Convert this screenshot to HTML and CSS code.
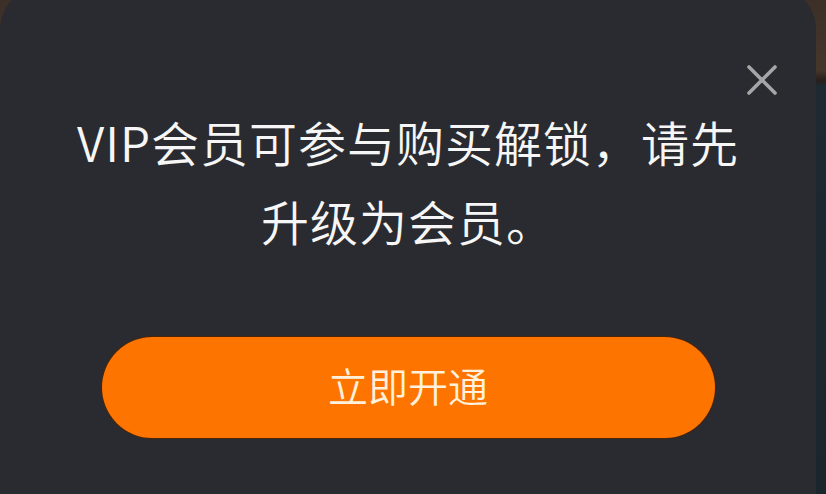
FILE: index.html
```html
<!DOCTYPE html>
<html lang="zh-CN">
<head>
<meta charset="utf-8">
<title>VIP</title>
<link rel="stylesheet" href="styles.css">
</head>
<body>
<div class="dialog">
  <button class="close" aria-label="关闭">
    <svg width="30" height="30" viewBox="0 0 30 30"><path d="M2 2 L28 28 M28 2 L2 28" stroke="#a6a6a8" stroke-width="3.6" stroke-linecap="round" fill="none"/></svg>
  </button>
  <p class="message">VIP会员可参与购买解锁，请先升级为会员。</p>
  <button class="cta">立即开通</button>
</div>
</body>
</html>
```

FILE: styles.css
```css
html, body {
  margin: 0;
  padding: 0;
  height: 100%;
  overflow: hidden;
}
body {
  background: linear-gradient(to bottom, #3b2f28 0px, #46372c 70px, #2a1f1a 80px, #1d2a31 86px, #1b252c 100%);
  font-family: "Noto Sans CJK SC", "Noto Sans", sans-serif;
}
.dialog {
  position: relative;
  box-sizing: border-box;
  margin-left: 0;
  margin-top: -15px;
  width: 816px;
  height: 530px;
  background: #2a2b30;
  border-radius: 45px 45px 0 0;
  padding: 117px 70px 0;
  display: flex;
  flex-direction: column;
  align-items: center;
}
.close {
  position: absolute;
  top: 80px;
  right: 39px;
  width: 30px;
  height: 30px;
  padding: 0;
  border: 0;
  background: none;
  display: block;
}
.close svg { display: block; }
.message {
  margin: 0;
  color: #f6f6f6;
  font-size: 48px;
  font-weight: 350;
  letter-spacing: 1px;
  line-height: 79px;
  text-align: center;
  width: 100%;
}
.cta {
  margin-top: 77px;
  width: 613px;
  height: 101px;
  border: 0;
  border-radius: 51px;
  background: #fe7400;
  box-shadow: 0 0 0 1px #4a2508;
  color: #fff1dc;
  font-family: "Noto Sans CJK SC", "Noto Sans", sans-serif;
  font-size: 40px;
  font-weight: 350;
  line-height: 1;
  padding: 0 0 6px;
}
```
